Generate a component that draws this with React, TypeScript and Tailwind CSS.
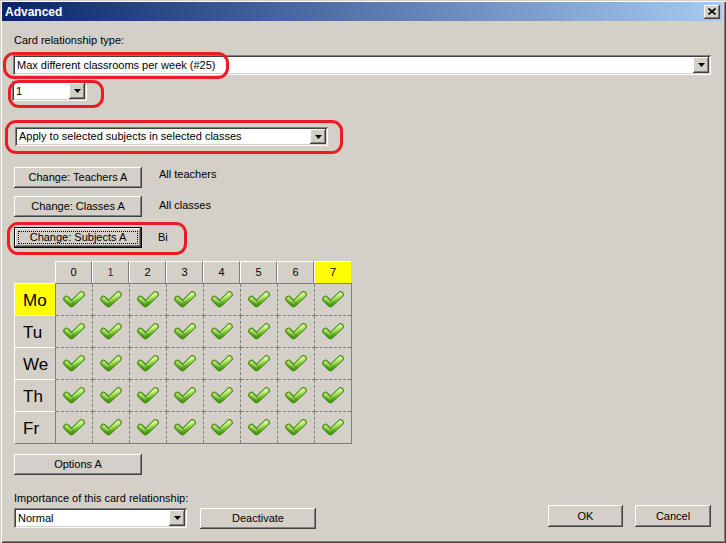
import React from "react";

const raised =
  "bg-[#d4d0c8] shadow-[inset_-1px_-1px_#404040,inset_1px_1px_#ffffff,inset_-2px_-2px_#808080,inset_2px_2px_#d4d0c8]";
const sunken =
  "shadow-[inset_1px_1px_#808080,inset_-1px_-1px_#ffffff,inset_2px_2px_#404040,inset_-2px_-2px_#d4d0c8]";

function Arrow() {
  return (
    <svg width="7" height="4" viewBox="0 0 7 4">
      <polygon points="0,0 7,0 3.5,4" fill="#000" />
    </svg>
  );
}

function Combo({ text, className }: { text: string; className: string }) {
  return (
    <div className={`flex bg-white p-[2px] ${sunken} ${className}`}>
      <div className="flex-1 flex items-center pl-[2px] text-[11px] text-black leading-none">{text}</div>
      <div className={`w-[16px] flex items-center justify-center ${raised}`}>
        <Arrow />
      </div>
    </div>
  );
}

function Btn({ children, className }: { children: React.ReactNode; className: string }) {
  return (
    <div className={`flex items-center justify-center text-[11px] text-black ${raised} ${className}`}>
      {children}
    </div>
  );
}

function Check() {
  return (
    <svg width="22" height="17" viewBox="0 0 22 17">
      <defs>
        <linearGradient id="cg" x1="0" y1="0" x2="0" y2="1">
          <stop offset="0" stopColor="#c8f282" />
          <stop offset="0.5" stopColor="#8ad23e" />
          <stop offset="1" stopColor="#4f9f16" />
        </linearGradient>
      </defs>
      <path
        d="M3.5 8 L8.5 13 L18.5 3.5"
        fill="none"
        stroke="#3d7f12"
        strokeWidth="6.5"
        strokeLinecap="round"
        strokeLinejoin="round"
      />
      <path
        d="M3.5 8 L8.5 13 L18.5 3.5"
        fill="none"
        stroke="url(#cg)"
        strokeWidth="4.5"
        strokeLinecap="round"
        strokeLinejoin="round"
      />
      <path
        d="M3.2 7.2 L8.2 11.7 M10.5 9.5 L18 3"
        fill="none"
        stroke="#eaffc8"
        strokeWidth="1"
        strokeLinecap="round"
        opacity="0.7"
      />
    </svg>
  );
}

const hours = ["0", "1", "2", "3", "4", "5", "6", "7"];
const days = ["Mo", "Tu", "We", "Th", "Fr"];

function Grid() {
  return (
    <div className="mt-[13px] flex flex-col">
      <div className="flex pl-[41px] h-[22px]">
        {hours.map((h, i) => (
          <div
            key={h}
            className={
              "w-[37px] h-[22px] flex items-center justify-center text-[11px] border-t border-l border-t-white border-l-white " +
              (i === 7 ? "bg-[#ffff00] " : "bg-[#d4d0c8] border-r border-r-[#808080] ") +
              (i === 1 ? "text-[#4a1050]" : "text-black")
            }
          >
            {h}
          </div>
        ))}
      </div>
      <div className="flex">
        <div className="flex flex-col w-[41px]">
          {days.map((d, i) => (
            <div
              key={d}
              className={
                "h-[32px] flex items-center pl-[8px] pt-[3px] text-[17px] text-black border-t border-l border-t-white border-l-white " +
                (i === 0 ? "bg-[#ffff00] " : "bg-[#d4d0c8] ") +
                (i === 4 ? "h-[33px] border-b border-b-[#808080]" : "")
              }
            >
              {d}
            </div>
          ))}
        </div>
        <div className="border border-[#808080] grid grid-cols-[repeat(7,37px)_36px] grid-rows-[repeat(4,32px)_31px]">
          {days.map((d, r) =>
            hours.map((h, c) => (
              <div
                key={d + h}
                className={
                  "flex items-center justify-center border-[#808080] border-dashed " +
                  (c < 7 ? "border-r " : "") +
                  (r < 4 ? "border-b" : "")
                }
              >
                <Check />
              </div>
            ))
          )}
        </div>
      </div>
    </div>
  );
}

function RedMark({ className }: { className: string }) {
  return <div className={`absolute border-[3px] border-[#ec1c24] rounded-[11px] pointer-events-none ${className}`} />;
}

export default function App() {
  return (
    <div className="relative w-[726px] h-[543px] bg-[#d4d0c8] overflow-hidden font-['Liberation_Sans',Arial,sans-serif] shadow-[inset_1px_1px_#d4d0c8,inset_2px_2px_#ffffff,inset_-1px_-1px_#404040,inset_-2px_-2px_#808080] pt-[2px] pl-[2px] pr-[4px] flex flex-col">
      {/* Title bar */}
      <div className="h-[19px] flex items-center justify-between bg-[linear-gradient(to_right,#0a246a,#a6caf0)]">
        <div className="pl-[3px] text-[12px] font-bold text-white leading-none">Advanced</div>
        <div className={`w-[16px] h-[14px] mr-[2px] flex items-center justify-center ${raised}`}>
          <svg width="8" height="7" viewBox="0 0 8 7">
            <path d="M0.5 0.5 L7.5 6.5 M7.5 0.5 L0.5 6.5" stroke="#000" strokeWidth="1.6" />
          </svg>
        </div>
      </div>

      {/* Content */}
      <div className="flex flex-col pl-[12px] pr-[11px]">
        <div className="mt-[13px] text-[11px] leading-[13px] text-black">Card relationship type:</div>
        <Combo text="Max different classrooms per week (#25)" className="mt-[8px] h-[20px] ml-[-1px]" />
        <Combo text="1" className="mt-[6px] h-[20px] w-[75px] ml-[-2px]" />
        <Combo text="Apply to selected subjects in selected classes" className="mt-[26px] h-[19px] w-[313px] ml-[1px]" />

        <div className="mt-[21px] flex">
          <Btn className="w-[128px] h-[21px]">Change: Teachers A</Btn>
          <div className="ml-[17px] mt-[1px] text-[11px] leading-[13px] text-black">All teachers</div>
        </div>
        <div className="mt-[8px] flex">
          <Btn className="w-[128px] h-[21px]">Change: Classes A</Btn>
          <div className="ml-[17px] mt-[3px] text-[11px] leading-[13px] text-black">All classes</div>
        </div>
        <div className="mt-[10px] flex">
          <div className="w-[128px] h-[21px] border border-black">
            <div className={`relative w-full h-full flex items-center justify-center text-[11px] text-black ${raised}`}>
              <div className="absolute inset-x-[3px] inset-y-[3px] border border-dotted border-black" />
              Change: Subjects A
            </div>
          </div>
          <div className="ml-[16px] mt-[4px] text-[11px] leading-[13px] text-black">Bi</div>
        </div>

        <Grid />

        <Btn className="mt-[10px] w-[128px] h-[21px]">Options A</Btn>

        <div className="flex items-end justify-between">
          <div className="flex flex-col">
            <div className="mt-[17px] text-[11px] leading-[13px] text-black">Importance of this card relationship:</div>
            <div className="mt-[3px] flex items-start">
              <Combo text="Normal" className="h-[20px] w-[173px]" />
              <Btn className="ml-[13px] w-[116px] h-[21px]">Deactivate</Btn>
            </div>
          </div>
          <div className="flex gap-[12px] mb-[2px]">
            <Btn className="w-[75px] h-[22px]">OK</Btn>
            <Btn className="w-[76px] h-[22px]">Cancel</Btn>
          </div>
        </div>
      </div>

      <RedMark className="left-[3px] top-[52px] w-[226px] h-[27px]" />
      <RedMark className="left-[8px] top-[80px] w-[96px] h-[28px]" />
      <RedMark className="left-[5px] top-[120px] w-[338px] h-[34px]" />
      <RedMark className="left-[7px] top-[222px] w-[180px] h-[33px]" />
    </div>
  );
}
